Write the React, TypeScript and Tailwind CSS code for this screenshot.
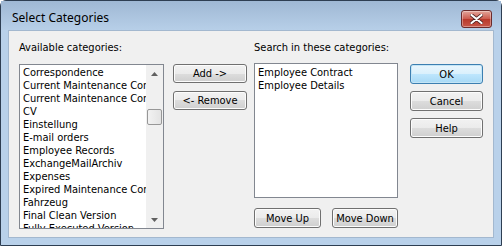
const available = [
  "Correspondence",
  "Current Maintenance Contract",
  "Current Maintenance Contracts",
  "CV",
  "Einstellung",
  "E-mail orders",
  "Employee Records",
  "ExchangeMailArchiv",
  "Expenses",
  "Expired Maintenance Contracts",
  "Fahrzeug",
  "Final Clean Version",
  "Fully Executed Version",
];

const selected = ["Employee Contract", "Employee Details"];

const font = "font-['DejaVu_Sans_Condensed','Liberation_Sans',sans-serif]";

function WinButton({
  label,
  className = "",
  focused = false,
}: {
  label: string;
  className?: string;
  focused?: boolean;
}) {
  return (
    <button
      type="button"
      className={`flex items-center justify-center rounded-[3px] border text-[11px] text-black leading-none ${
        focused
          ? "border-[#3c7fb1] bg-[linear-gradient(#eaf6fd_0%,#d9f0fc_50%,#bee6fd_50%,#a7d9f5_100%)] shadow-[inset_0_0_0_1px_#c4e5f6]"
          : "border-[#707070] bg-[linear-gradient(#f2f2f2_0%,#ebebeb_50%,#dddddd_50%,#cfcfcf_100%)] shadow-[inset_0_0_0_1px_#fcfcfc]"
      } ${className}`}
    >
      {label}
    </button>
  );
}

function ScrollArrow({ down = false }: { down?: boolean }) {
  return (
    <div className="flex h-[17px] items-center justify-center">
      <svg width="7" height="4" viewBox="0 0 7 4">
        <path
          d={down ? "M0 0h7L3.5 4z" : "M0 4h7L3.5 0z"}
          fill="#606060"
        />
      </svg>
    </div>
  );
}

export default function App() {
  return (
    <div className={`w-[502px] h-[246px] overflow-hidden ${font}`}>
      <div className="flex h-full flex-col rounded-t-[6px] border border-[#2e3e52] bg-[#b9d1ea]">
        {/* title bar */}
        <div className="flex h-[29px] items-start bg-[linear-gradient(#9fb8d4,#b7cfe8)] pl-[11px] pr-[9px] pt-[9px]">
          <span className="font-['Noto_Sans',sans-serif] text-[12px] leading-[16px] text-black">
            Select Categories
          </span>
          <div className="flex-1" />
          <div className="flex h-[18px] w-[31px] items-center justify-center rounded-[3px] border border-[#6b2b2b] bg-[linear-gradient(#e3a69b,#cc5a4c_50%,#b8382a_50%,#c75749)] shadow-[inset_0_0_0_1px_rgba(255,255,255,0.35)]">
            <svg width="13" height="10" viewBox="0 0 13 10">
              <path
                d="M1.5 1L11.5 9M11.5 1L1.5 9"
                stroke="#4a2020"
                strokeWidth="3.6"
                strokeLinecap="round"
              />
              <path
                d="M1.5 1L11.5 9M11.5 1L1.5 9"
                stroke="#ffffff"
                strokeWidth="2.2"
                strokeLinecap="round"
              />
            </svg>
          </div>
        </div>

        {/* client area */}
        <div className="mx-[7px] flex h-[208px] border border-[#a3b8cf] bg-[#f0f0f0] pl-[10px] pt-[10px]">
          {/* available */}
          <div className="flex w-[145px] flex-col">
            <div className="h-[23px] text-[11px] leading-[13px] text-black">
              Available categories:
            </div>
            <div className="flex h-[165px] border border-[#828790] bg-white">
              <div className="flex-1 overflow-hidden pl-[3px] pt-[1px]">
                {available.map((item) => (
                  <div
                    key={item}
                    className="h-[13px] whitespace-nowrap text-[11px] leading-[13px] text-black"
                  >
                    {item}
                  </div>
                ))}
              </div>
              <div className="flex w-[17px] flex-col bg-[#f0f0f0]">
                <ScrollArrow />
                <div className="h-[27px]" />
                <div className="mx-[1px] h-[16px] rounded-[2px] border border-[#979797] bg-[linear-gradient(90deg,#f2f2f2,#e3e3e3)]" />
                <div className="flex-1" />
                <ScrollArrow down />
              </div>
            </div>
          </div>

          {/* add / remove */}
          <div className="ml-[9px] flex w-[74px] flex-col gap-[8px] pt-[23px]">
            <WinButton label="Add ->" className="h-[19px] w-[74px]" />
            <WinButton label="<- Remove" className="h-[19px] w-[74px]" />
          </div>

          {/* search in */}
          <div className="ml-[7px] flex w-[144px] flex-col">
            <div className="h-[22px] text-[11px] leading-[13px] text-black">
              Search in these categories:
            </div>
            <div className="h-[135px] border border-[#828790] bg-white pl-[3px] pt-[2px]">
              {selected.map((item) => (
                <div
                  key={item}
                  className="h-[13px] whitespace-nowrap text-[11px] leading-[13px] text-black"
                >
                  {item}
                </div>
              ))}
            </div>
            <div className="mt-[10px] flex justify-between">
              <WinButton label="Move Up" className="h-[20px] w-[67px]" />
              <WinButton label="Move Down" className="h-[20px] w-[66px]" />
            </div>
          </div>

          {/* ok / cancel / help */}
          <div className="ml-[12px] flex w-[73px] flex-col gap-[7px] pt-[23px]">
            <WinButton label="OK" focused className="h-[20px] w-[73px]" />
            <WinButton label="Cancel" className="h-[20px] w-[73px]" />
            <WinButton label="Help" className="h-[20px] w-[73px]" />
          </div>
        </div>
      </div>
    </div>
  );
}
